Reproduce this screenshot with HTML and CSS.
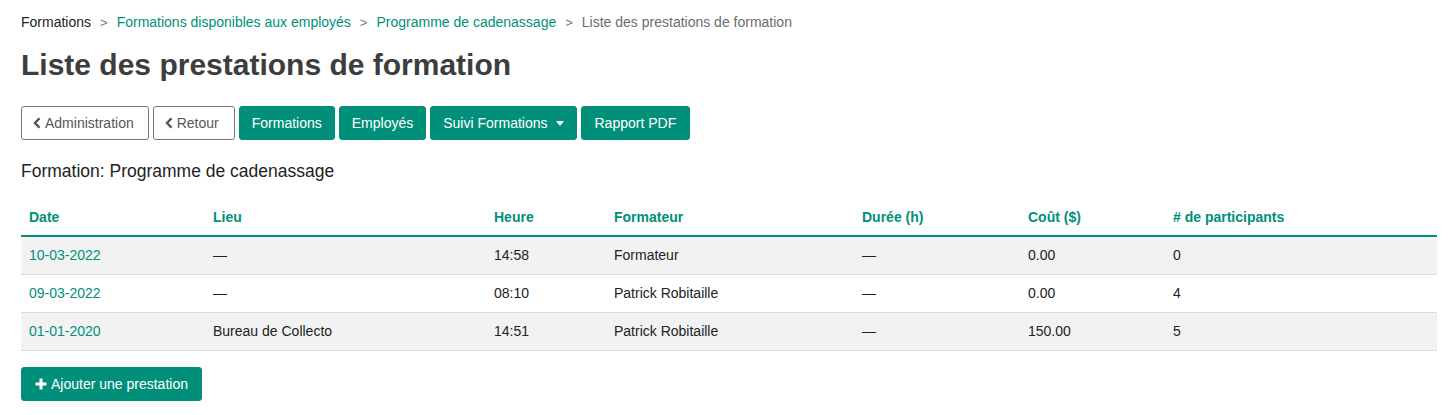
FILE: index.html
```html
<!DOCTYPE html>
<html lang="fr">
<head>
<meta charset="utf-8">
<title>Liste des prestations de formation</title>
<link rel="stylesheet" href="styles.css">
</head>
<body>
<div class="page">
  <nav class="crumbs">
    <span class="crumb-root">Formations</span>
    <span class="sep">&gt;</span>
    <a class="crumb-link" href="#">Formations disponibles aux employés</a>
    <span class="sep">&gt;</span>
    <a class="crumb-link" href="#">Programme de cadenassage</a>
    <span class="sep">&gt;</span>
    <span class="crumb-current">Liste des prestations de formation</span>
  </nav>
  <h1 class="title">Liste des prestations de formation</h1>
  <div class="toolbar">
    <a class="btn btn-outline" href="#"><svg class="chev" viewBox="0 0 8 12" width="8" height="12"><path d="M6.5 1.2 L2 6 L6.5 10.8" fill="none" stroke="currentColor" stroke-width="2.4"/></svg>Administration</a>
    <a class="btn btn-outline btn-back" href="#"><svg class="chev" viewBox="0 0 8 12" width="8" height="12"><path d="M6.5 1.2 L2 6 L6.5 10.8" fill="none" stroke="currentColor" stroke-width="2.4"/></svg>Retour</a>
    <a class="btn btn-teal" href="#">Formations</a>
    <a class="btn btn-teal" href="#">Employés</a>
    <a class="btn btn-teal" href="#">Suivi Formations<span class="caret"></span></a>
    <a class="btn btn-teal btn-pdf" href="#">Rapport PDF</a>
  </div>
  <h2 class="subtitle">Formation: Programme de cadenassage</h2>
  <table class="grid">
    <thead>
      <tr>
        <th class="c-date">Date</th>
        <th class="c-lieu">Lieu</th>
        <th class="c-heure">Heure</th>
        <th class="c-form">Formateur</th>
        <th class="c-duree">Durée (h)</th>
        <th class="c-cout">Coût ($)</th>
        <th># de participants</th>
      </tr>
    </thead>
    <tbody>
      <tr>
        <td><a href="#">10-03-2022</a></td>
        <td>—</td>
        <td>14:58</td>
        <td>Formateur</td>
        <td>—</td>
        <td>0.00</td>
        <td>0</td>
      </tr>
      <tr>
        <td><a href="#">09-03-2022</a></td>
        <td>—</td>
        <td>08:10</td>
        <td>Patrick Robitaille</td>
        <td>—</td>
        <td>0.00</td>
        <td>4</td>
      </tr>
      <tr>
        <td><a href="#">01-01-2020</a></td>
        <td>Bureau de Collecto</td>
        <td>14:51</td>
        <td>Patrick Robitaille</td>
        <td>—</td>
        <td>150.00</td>
        <td>5</td>
      </tr>
    </tbody>
  </table>
  <div class="actions">
    <a class="btn btn-teal btn-add" href="#"><svg class="plus" viewBox="0 0 12 12" width="12" height="12"><path d="M6 0.5 V11.5 M0.5 6 H11.5" stroke="currentColor" stroke-width="3"/></svg>Ajouter une prestation</a>
  </div>
</div>
</body>
</html>
```

FILE: styles.css
```css
* { box-sizing: border-box; }
html, body { margin: 0; padding: 0; background: #fff; }
body {
  font-family: "Liberation Sans", Arial, sans-serif;
  font-size: 14px;
  color: #222;
}
.page {
  padding: 12px 13px 0 21px;
}
.crumbs {
  display: flex;
  align-items: center;
  gap: 9px;
  height: 20px;
  font-size: 14px;
}
.crumb-root { color: #222; }
.sep { color: #777; font-size: 13px; }
.crumb-link { color: #00907a; text-decoration: none; }
.crumb-current { color: #6c6c6c; }
.title {
  margin: 15px 0 0;
  font-size: 30px;
  font-weight: bold;
  color: #3d3d3d;
  line-height: 36px;
  height: 36px;
}
.toolbar {
  display: flex;
  gap: 4px;
  margin-top: 23px;
}
.btn {
  display: inline-flex;
  align-items: center;
  height: 34px;
  padding: 0 12px;
  border-radius: 3px;
  font-size: 14px;
  text-decoration: none;
  line-height: 1;
  border: 1px solid transparent;
}
.btn-outline {
  background: #fff;
  border-color: #777;
  color: #555;
  padding: 0 14px 0 11px;
}
.btn-back { padding-right: 15px; }
.btn-teal {
  background: #00907a;
  border-color: #00907a;
  color: #fff;
}
.btn-pdf { padding: 0 13px; }
.chev { margin-right: 4px; color: #555; }
.caret {
  display: inline-block;
  width: 0;
  height: 0;
  margin-left: 8px;
  border-left: 4px solid transparent;
  border-right: 4px solid transparent;
  border-top: 5px solid #fff;
}
.subtitle {
  margin: 21px 0 0;
  font-size: 17.5px;
  font-weight: normal;
  color: #222;
  line-height: 20px;
}
.grid {
  width: 100%;
  margin-top: 18px;
  border-collapse: collapse;
}
.grid th {
  text-align: left;
  font-weight: bold;
  color: #00907a;
  padding: 0 8px;
  height: 37px;
  vertical-align: middle;
  border-bottom: 2px solid #00907a;
}
.grid td {
  padding: 0 8px;
  height: 38px;
  border-bottom: 1px solid #dcdcdc;
  color: #222;
}
.grid tbody tr:nth-child(odd) td { background: #f2f2f2; }
.grid td a { color: #00907a; text-decoration: none; }
.c-date { width: 184px; }
.c-lieu { width: 281px; }
.c-heure { width: 120px; }
.c-form { width: 248px; }
.c-duree { width: 166px; }
.c-cout { width: 145px; }
.actions { margin-top: 16px; }
.btn-add { padding: 0 13px 0 13px; }
.plus { margin-right: 4px; }
```
